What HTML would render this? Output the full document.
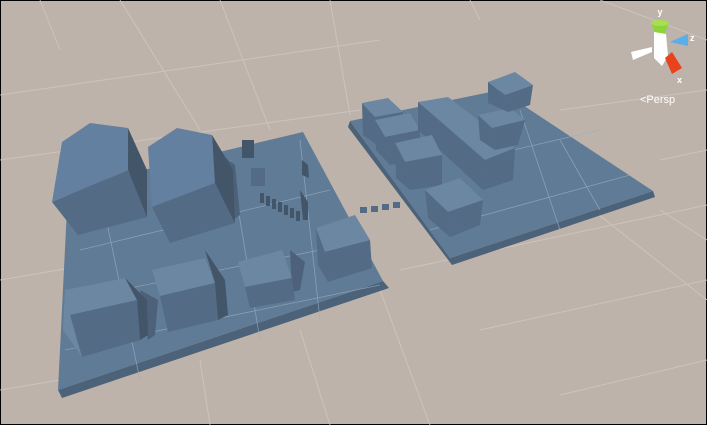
<!DOCTYPE html>
<html><head><style>
html,body{margin:0;padding:0;}
body{width:707px;height:425px;overflow:hidden;background:#bdb3aa;}
svg{display:block;}
.t{fill:#6c87a2}.f{fill:#536b84}.s{fill:#435569}.p{fill:#607b96}.e{fill:#4c6279}.sh{fill:#4d627a}
</style></head><body>
<svg width="707" height="425" viewBox="0 0 707 425" xmlns="http://www.w3.org/2000/svg">
<rect x="0.5" y="0.5" width="706" height="424" fill="#bdb3aa" stroke="#000"/>
<g stroke="#d0c8c0" stroke-width="1" opacity="0.8" fill="none">
<path d="M0 95 L380 40 M0 160 L360 110 M0 280 L70 268 M0 390 L60 380 M400 270 L707 205 M480 330 L707 280 M560 395 L707 360 M660 160 L707 150 M560 110 L707 90 M120 0 L200 130 M220 0 L270 130 M330 0 L350 115 M40 0 L60 50 M470 0 L480 20 M600 0 L707 40 M580 200 L707 300 M380 290 L430 425 M300 330 L330 425 M200 360 L210 425 M660 210 L707 240"/>
</g>
<!-- left plate -->
<polygon class="e" points="58,390 383,281 389,288 62,398"/>
<polygon class="p" points="58,390 68,188 303,132 383,281"/>
<g stroke="#9ab0c4" stroke-width="0.8" opacity="0.7"><path d="M70 300 L370 240 M65 350 L380 285 M80 250 L330 190 M100 190 L140 380 M230 160 L260 340 M300 140 L320 320"/></g>
<!-- shadows -->
<polygon class="sh" points="215,150 235,165 240,215 225,225"/>
<polygon class="sh" points="290,250 305,262 300,290 292,292"/>
<polygon class="sh" points="140,290 158,300 155,335 148,340"/>
<!-- houses -->
<polygon points="52,202 62,142 90,123 128,128 128,170" fill="#6480a0"/>
<polygon class="f" points="52,202 128,170 147,217 78,235"/>
<polygon class="s" points="128,128 147,170 147,217 128,170"/>
<polygon points="152,207 148,147 177,128 212,135 215,183" fill="#6480a0"/>
<polygon class="f" points="152,207 215,183 235,223 170,243"/>
<polygon class="s" points="212,135 233,170 235,223 215,183"/>
<!-- small objects -->
<rect x="242" y="140" width="12" height="18" class="s"/>
<rect x="251" y="168" width="14" height="18" class="f"/>
<polygon class="s" points="302,160 308,165 309,178 302,175"/>
<g class="s"><rect x="260" y="193" width="4" height="10"/><rect x="266" y="196" width="4" height="10"/><rect x="272" y="199" width="4" height="10"/><rect x="278" y="202" width="4" height="10"/><rect x="284" y="205" width="4" height="10"/><rect x="290" y="208" width="4" height="10"/><rect x="296" y="211" width="4" height="10"/></g>
<polygon class="s" points="300,190 308,202 308,220 303,220"/>
<g class="f"><rect x="360" y="207" width="7" height="6"/><rect x="371" y="206" width="7" height="6"/><rect x="382" y="204" width="7" height="6"/><rect x="393" y="202" width="7" height="6"/></g>
<!-- box A -->
<polygon class="t" points="65,290 125,278 137,300 70,315"/>
<polygon class="f" points="70,315 137,300 140,340 82,357"/>
<polygon class="t" points="65,290 70,315 82,357 63,330"/>
<polygon class="s" points="125,278 147,300 148,335 140,340 137,300"/>
<!-- box B -->
<polygon class="t" points="152,270 205,258 215,283 160,296"/>
<polygon class="f" points="160,296 215,283 218,320 168,332"/>
<polygon class="s" points="205,250 225,280 228,315 218,320 215,283"/>
<!-- box C -->
<polygon class="t" points="238,262 282,250 292,278 245,287"/>
<polygon class="f" points="245,287 292,278 295,300 250,308"/>
<!-- box D -->
<polygon class="t" points="316,228 355,215 370,240 325,252"/>
<polygon class="f" points="325,252 370,240 372,268 328,282"/>
<polygon class="f" points="316,228 325,252 328,282 318,265"/>
<!-- right plate -->
<polygon class="e" points="350,121 450,258 653,191 655,197 452,265 348,127"/>
<polygon class="p" points="350,121 500,90 653,191 450,258"/>
<g stroke="#9ab0c4" stroke-width="0.8" opacity="0.7"><path d="M430 230 L630 175 M520 110 L560 230 M560 140 L600 210 M470 160 L600 130"/></g>
<!-- right boxes -->
<polygon class="t" points="362,103 388,98 403,112 375,117"/>
<polygon class="f" points="375,117 403,112 403,140 377,145"/>
<polygon class="f" points="362,103 375,117 377,145 363,135"/>
<polygon class="t" points="375,120 410,113 420,130 385,137"/>
<polygon class="f" points="385,137 420,130 420,160 390,165"/>
<polygon class="f" points="375,120 385,137 390,165 376,150"/>
<polygon class="t" points="418,102 448,97 515,148 485,160"/>
<polygon class="f" points="485,160 515,148 513,180 483,190"/>
<polygon class="f" points="418,102 485,160 483,190 418,130"/>
<polygon class="t" points="395,143 432,135 442,155 405,162"/>
<polygon class="f" points="405,162 442,155 442,185 410,190"/>
<polygon class="f" points="395,143 405,162 410,190 396,178"/>
<polygon class="t" points="478,115 510,108 525,120 492,128"/>
<polygon class="f" points="492,128 525,120 518,145 495,150"/>
<polygon class="f" points="478,115 492,128 495,150 480,140"/>
<polygon class="t" points="488,82 515,72 533,85 505,95"/>
<polygon class="f" points="505,95 533,85 530,105 508,112"/>
<polygon class="f" points="488,82 505,95 508,112 488,103"/>
<polygon class="t" points="425,190 460,178 483,200 448,212"/>
<polygon class="f" points="448,212 483,200 480,225 450,237"/>
<polygon class="f" points="425,190 448,212 450,237 428,218"/>
<!-- gizmo -->
<polygon points="651,23 669,23 662,40 658,40" fill="#8fd23a"/>
<ellipse cx="660" cy="23" rx="9" ry="3" fill="#a6e04c"/>
<polygon points="654,32 666,34 668,56 662,66 654,58" fill="#fff"/>
<polygon points="670,42 688,34 688,46" fill="#5aaeea"/>
<polygon points="631,52 652,47 652,52 633,60" fill="#fff"/>
<polygon points="665,58 672,52 682,68 672,74" fill="#e8431c"/>
<text x="660" y="15" font-family="Liberation Sans,sans-serif" font-size="9" font-weight="bold" fill="#fff" text-anchor="middle">y</text>
<text x="690" y="41" font-family="Liberation Sans,sans-serif" font-size="9" font-weight="bold" fill="#fff">z</text>
<text x="677" y="83" font-family="Liberation Sans,sans-serif" font-size="9" font-weight="bold" fill="#fff">x</text>
<text x="640" y="103" font-family="Liberation Sans,sans-serif" font-size="11" fill="#fff">&lt;Persp</text>
</svg>
</body></html>
